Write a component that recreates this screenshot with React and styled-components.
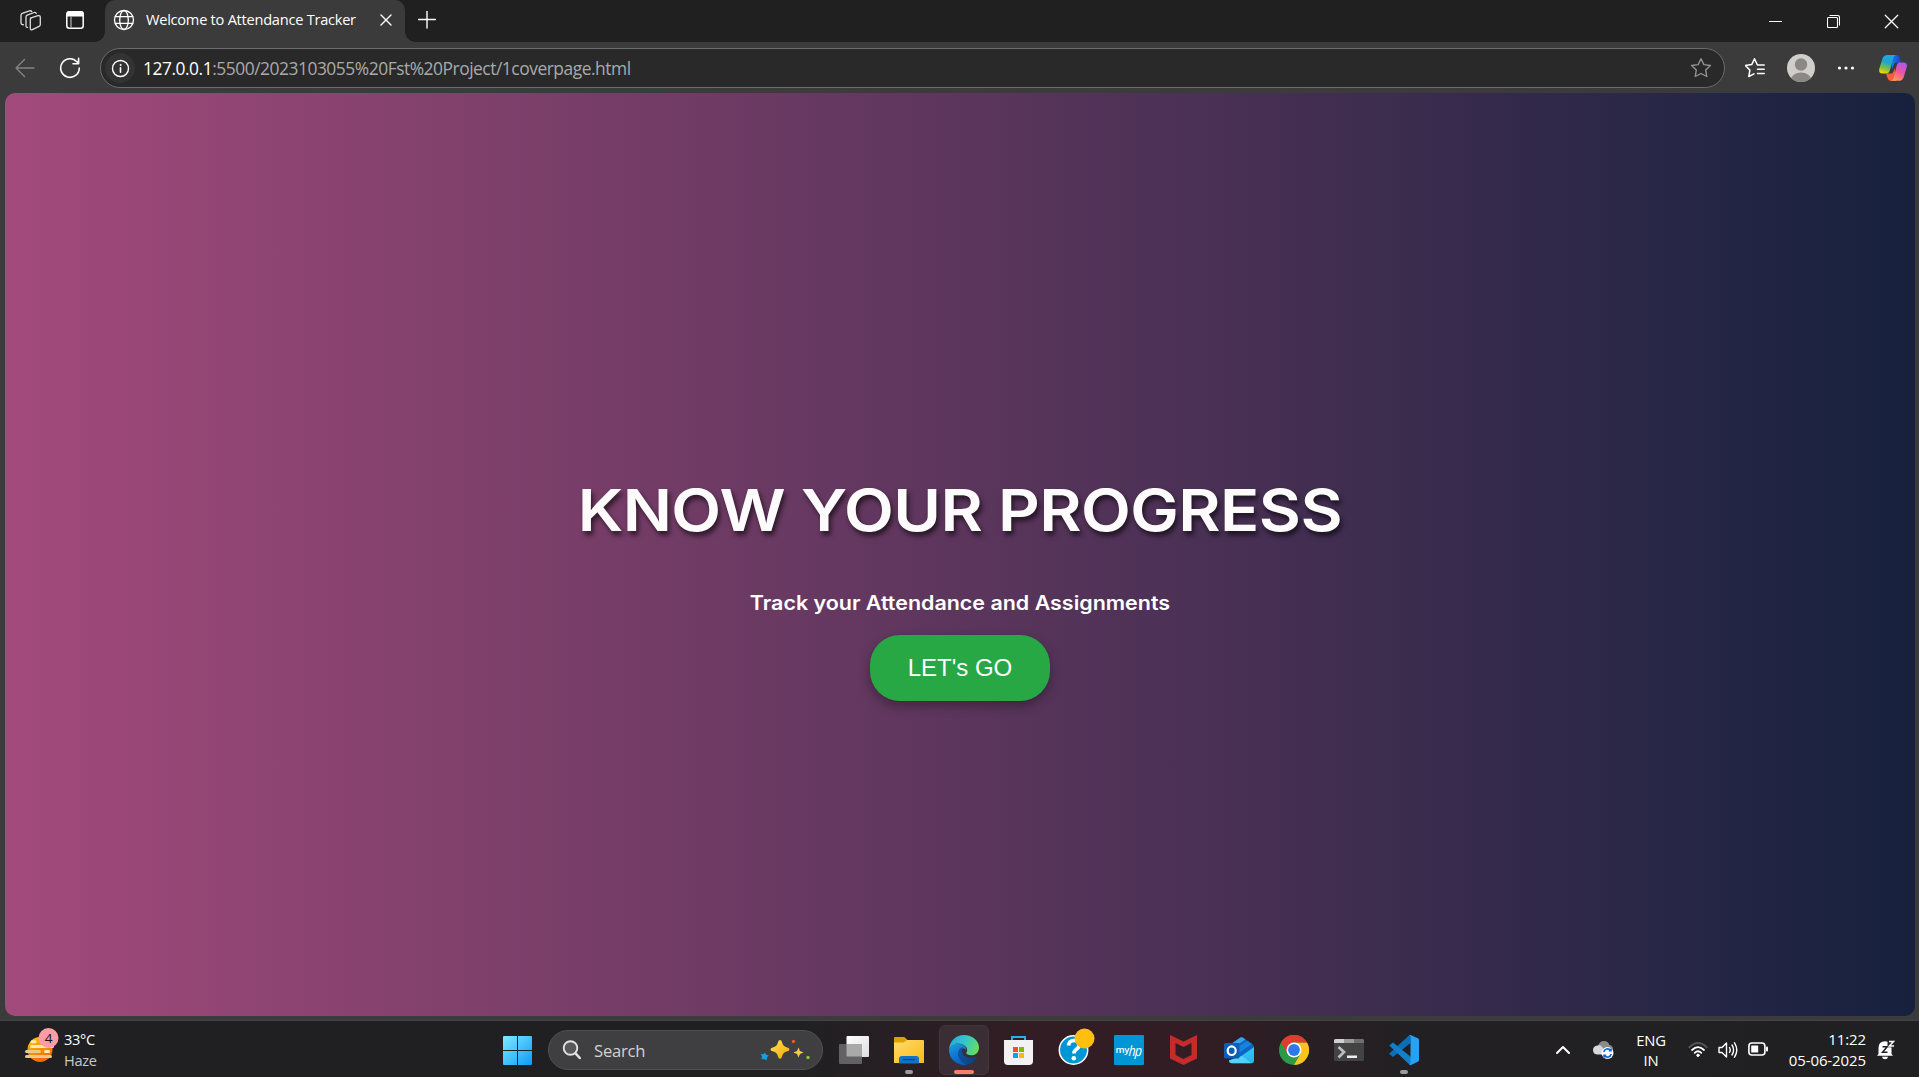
import React from 'react';
import styled, { createGlobalStyle, css } from 'styled-components';

const GlobalStyle = createGlobalStyle`
  * { box-sizing: border-box; }
  html, body { margin: 0; padding: 0; background: #3b3b3b; overflow: hidden; }
  svg { display: block; flex: none; }
`;

const ui = "'Open Sans', 'Noto Sans', sans-serif";

const Screen = styled.div`
  width: 1919px;
  height: 1077px;
  display: flex;
  flex-direction: column;
  font-family: ${ui};
  color: #fff;
  overflow: hidden;
`;

const TitleBar = styled.header`
  height: 42px;
  background: #202020;
  display: flex;
  align-items: flex-start;
`;

const TitleTools = styled.div`
  width: 105px;
  height: 42px;
  padding: 10px 0 0 20px;
  display: flex;
  gap: 25px;
`;

const Tab = styled.div`
  position: relative;
  width: 300px;
  height: 42px;
  padding: 0 13px 2px 8px;
  background: #3b3b3b;
  border-radius: 10px 10px 0 0;
  display: flex;
  align-items: center;
  &::before, &::after {
    content: '';
    position: absolute;
    bottom: 0;
    width: 10px;
    height: 10px;
  }
  &::before {
    left: -10px;
    background: radial-gradient(circle at 0 0, transparent 9.5px, #3b3b3b 10px);
  }
  &::after {
    right: -10px;
    background: radial-gradient(circle at 100% 0, transparent 9.5px, #3b3b3b 10px);
  }
`;

const TabTitle = styled.span`
  flex: 1;
  margin-left: 11px;
  padding-bottom: 2px;
  font-size: 14.6px;
  letter-spacing: -0.25px;
  line-height: 20px;
  white-space: nowrap;
`;

const NewTab = styled.div`
  padding: 11px 0 0 13px;
`;

const WindowButtons = styled.div`
  margin-left: auto;
  margin-right: -1px;
  display: flex;
`;

const WindowButton = styled.div`
  width: 58px;
  height: 42px;
  display: flex;
  align-items: center;
  justify-content: center;
`;

const Toolbar = styled.div`
  height: 51px;
  padding: 6px 12px 5px 14px;
  background: #3b3b3b;
  display: flex;
  align-items: center;
`;

const NavIcons = styled.div`
  width: 86px;
  display: flex;
  gap: 23px;
`;

const AddressBar = styled.div`
  width: 1625px;
  height: 40px;
  padding: 0 12px 0 4px;
  border: 1px solid #6b6b6b;
  border-radius: 20px;
  background: #292929;
  display: flex;
  align-items: center;
`;

const SiteInfo = styled.div`
  width: 30px;
  height: 30px;
  border-radius: 50%;
  background: #333;
  display: flex;
  align-items: center;
  justify-content: center;
`;

const Url = styled.div`
  flex: 1;
  margin-left: 8px;
  font-size: 17.4px;
  letter-spacing: -0.47px;
  line-height: 24px;
  white-space: nowrap;
  color: #a9a9a9;
  b { font-weight: 400; color: #fff; }
`;

const ToolbarRight = styled.div`
  flex: 1;
  display: flex;
  align-items: center;
  padding-left: 20px;
  gap: 21px;
`;

const Frame = styled.main`
  height: 927px;
  padding: 0 4px 4px 5px;
  background: #3b3b3b;
`;

const Page = styled.section`
  height: 923px;
  padding-top: 380px;
  border-radius: 10px;
  background: linear-gradient(to right, #a24a7b, #16213e);
  display: flex;
  flex-direction: column;
  align-items: center;
`;

const Headline = styled.h1`
  margin: 0;
  font-family: Inter, sans-serif;
  font-size: 58px;
  font-weight: 600;
  line-height: 74px;
  letter-spacing: -0.5px;
  transform: scaleX(1.118);
  color: #fdfbfc;
  white-space: nowrap;
  text-shadow: 2px 4px 5px rgba(0, 0, 0, 0.6);
`;

const Subtitle = styled.p`
  margin: 44px 0 19px;
  font-family: Inter, sans-serif;
  font-size: 19.4px;
  font-weight: 600;
  line-height: 25px;
  transform: scaleX(1.106);
  white-space: nowrap;
`;

const GoButton = styled.button`
  width: 180px;
  height: 66px;
  border: 0;
  border-radius: 30px;
  background: #28a745;
  color: #fff;
  font: 24px 'Liberation Sans', Arial, sans-serif;
  box-shadow: 0 5px 12px rgba(0, 0, 0, 0.32);
`;

const Taskbar = styled.footer`
  height: 57px;
  border-top: 1px solid #444;
  background: linear-gradient(to right, #202022 800px, #321d24 1020px, #321d24 1190px, #222023 1400px, #202022);
  display: grid;
  grid-template-columns: 490px 942px 1fr;
`;

const Weather = styled.div`
  padding: 6px 0 0 24px;
  display: flex;
  gap: 4px;
`;

const WeatherText = styled.div`
  padding-top: 2px;
  font-size: 14.6px;
  letter-spacing: -0.3px;
  line-height: 20.5px;
  span { display: block; color: #c8c8c8; }
`;

const Apps = styled.div`
  display: flex;
  align-items: center;
`;

const Slot = styled.div`
  position: relative;
  width: 55px;
  height: 56px;
  display: flex;
  align-items: center;
  justify-content: center;
  padding-top: 2px;
  ${(p) => p.$running && css`
    &::after {
      content: '';
      position: absolute;
      bottom: 3px;
      left: 50%;
      width: ${p.$active ? 20 : 8}px;
      height: 4px;
      margin-left: ${p.$active ? -10 : -4}px;
      border-radius: 2px;
      background: ${p.$active ? '#f4806a' : '#9b9b9b'};
    }
  `}
`;

const ActiveTile = styled.div`
  width: 50px;
  height: 50px;
  border: 1px solid #43363d;
  border-radius: 6px;
  background: #3a2d34;
  display: flex;
  align-items: center;
  justify-content: center;
`;

const SearchBox = styled.div`
  width: 275px;
  height: 40px;
  margin: 2px 3px 0;
  padding: 0 12px 0 13px;
  border: 1px solid #515153;
  border-radius: 20px;
  background: #3f3f41;
  display: flex;
  align-items: center;
`;

const SearchLabel = styled.span`
  flex: 1;
  margin-left: 12px;
  font-size: 16.6px;
  letter-spacing: -0.2px;
  color: #d2d2d2;
`;

const MyHp = styled.div`
  width: 30px;
  height: 30px;
  border-radius: 1px;
  background: #0096d6;
  display: flex;
  align-items: center;
  justify-content: center;
  font-size: 9.5px;
  font-weight: 600;
  letter-spacing: -0.4px;
  line-height: 28px;
  i {
    font: italic 400 15px 'Liberation Sans', sans-serif;
    letter-spacing: -0.5px;
    transform: scaleX(0.8) skewX(-6deg);
    transform-origin: left;
    margin-right: -3px;
  }
`;

const Tray = styled.div`
  padding: 2px 24px 0 123px;
  display: flex;
  align-items: center;
`;

const Language = styled.div`
  width: 74px;
  font-size: 14.8px;
  letter-spacing: -0.2px;
  line-height: 20px;
  text-align: center;
`;

const Status = styled.div`
  display: flex;
  gap: 10px;
`;

const Clock = styled.div`
  flex: 1;
  margin-right: 11px;
  font-size: 15px;
  letter-spacing: -0.1px;
  line-height: 20.5px;
  text-align: right;
  margin-top: -1px;
`;

const TrayIcon = styled.div`
  margin-left: ${(p) => p.$left || 0}px;
`;

const line = { fill: 'none', stroke: '#fff', strokeWidth: 1.4, strokeLinecap: 'round', strokeLinejoin: 'round' };

const WorkspacesIcon = () => (
  <svg width="21" height="21" viewBox="0 0 21 21" {...line} stroke="#ddd" strokeWidth="1.3">
    <path d="M10.3 8.2 18 5.7q2.3-.5 2.3 1.6v7.3q0 1.2-1.2 1.7l-6.8 3.4q-2 .7-2-1.4V9.7q0-1.2 1-1.7z" />
    <path d="M7.6 17.3q-1.6.4-1.6-1.6V7q0-1.400 1.200-1.900L14 2.500q1.700-.5 2.300 1" />
    <path d="M3.400 14.700q-2.100.3-2.400-1.500V5.300q0-1.400 1.200-1.900L9.500.9q1.600-.5 2.200.7" />
  </svg>
);

const TabActionsIcon = () => (
  <svg width="18" height="20" viewBox="0 0 18 20">
    <rect x=".8" y="1.800" width="16.400" height="16.400" rx="2.500" fill="none" stroke="#fff" strokeWidth="1.500" />
    <path d="M.5 6.500V3.500q0-2.500 2.500-2.500h12q2.500 0 2.500 2.500v3z" fill="#fff" />
    <path d="M5 6v12" stroke="#aaa" strokeWidth="1.300" />
  </svg>
);

const GlobeIcon = () => (
  <svg width="22" height="22" viewBox="0 0 22 22" {...line} strokeWidth="1.300">
    <circle cx="11" cy="11" r="9.500" />
    <ellipse cx="11" cy="11" rx="4.300" ry="9.500" />
    <path d="M2.300 7.700h17.400M2.300 14.300h17.400" />
  </svg>
);

const CloseIcon = ({ size = 12, width = 1.5 }) => (
  <svg width={size} height={size} viewBox="0 0 12 12" {...line} strokeWidth={width}>
    <path d="m1 1 10 10M11 1 1 11" />
  </svg>
);

const BackIcon = () => (
  <svg width="22" height="22" viewBox="0 0 22 22" {...line} stroke="#838383">
    <path d="M20 11H2M10.500 2.500 2 11l8.500 8.500" />
  </svg>
);

const ReloadIcon = () => (
  <svg width="22" height="22" viewBox="0 0 22 22" {...line} strokeWidth="1.600">
    <path d="M20.300 11a9.300 9.300 0 1 1-2.400-6.200L19.400 6.500M19.600 1.200v5.500H14" />
  </svg>
);

const InfoIcon = () => (
  <svg width="19" height="19" viewBox="0 0 19 19" {...line}>
    <circle cx="9.500" cy="9.500" r="8" />
    <path d="M9.500 8.700v4.500" strokeWidth="1.600" />
    <circle cx="9.500" cy="6" r=".6" fill="#fff" strokeWidth=".8" />
  </svg>
);

const StarIcon = () => (
  <svg width="22" height="22" viewBox="0 0 22 22" {...line} stroke="#929292">
    <path d="m11 1.700 2.900 5.900 6.500.9-4.700 4.600 1.100 6.400-5.800-3-5.800 3 1.100-6.400L1.600 8.500l6.500-.9z" />
  </svg>
);

const FavouritesIcon = () => (
  <svg width="21" height="22" viewBox="1 0 21 22" {...line} strokeWidth="1.500">
    <path d="M14 8h-.6L10.500 1.800 7.700 7.600l-6.400.9 4.600 4.600L4.800 19.500l5.200-2.700M13.500 8h6.700M13.500 12.300h6.700M13.500 16.500h6.700" />
  </svg>
);

const Avatar = () => (
  <svg width="28" height="28" viewBox="0 0 28 28">
    <clipPath id="face"><circle cx="14" cy="14" r="14" /></clipPath>
    <g clipPath="url(#face)">
      <path fill="#d0cecb" d="M0 0h28v28H0z" />
      <circle cx="14" cy="10.500" r="6.200" fill="#8c8885" />
      <ellipse cx="14" cy="25.500" rx="9.800" ry="7" fill="#8c8885" />
    </g>
  </svg>
);

const MoreIcon = () => (
  <svg width="20" height="6" viewBox="-1 0 20 6" fill="#fff">
    <circle cx="2.500" cy="3" r="1.600" /><circle cx="9" cy="3" r="1.600" /><circle cx="15.500" cy="3" r="1.600" />
  </svg>
);

const CopilotSlot = styled.div`
  margin-left: auto;
`;

const CopilotIcon = () => (
  <svg width="28" height="27" viewBox="0 0 28 27">
    <defs>
      <linearGradient id="cpA" x1=".6" y1="0" x2=".3" y2="1">
        <stop offset="0" stopColor="#1ba7f0" /><stop offset=".4" stopColor="#22a5c8" /><stop offset=".75" stopColor="#7fc440" /><stop offset="1" stopColor="#ffd300" />
      </linearGradient>
      <linearGradient id="cpB" x1=".8" y1="0" x2=".3" y2="1">
        <stop offset="0" stopColor="#a35af5" /><stop offset=".5" stopColor="#ed53a5" /><stop offset="1" stopColor="#ff9a50" />
      </linearGradient>
      <linearGradient id="cpC"><stop offset="0" stopColor="#1b7fe8" /><stop offset="1" stopColor="#1741d2" /></linearGradient>
    </defs>
    <path d="M12 0h5.500q2.300 0 3 2.200L22 7.500h-4.500q-2 0-2.700 2L13 14z" fill="url(#cpC)" />
    <path d="M7 18.500h5q2 0 2.500-2l1-3.500L17 26h-4.500q-3 0-3.800-2.600z" fill="#f4603c" />
    <path d="M8.500 0H17q-2 .6-2.600 2.700L11 15q-1 3.500-4 3.500H3.500Q-.8 18.500.4 13.500L3.300 4Q4.500 0 8.500 0z" fill="url(#cpA)" />
    <path d="M20 7.500h4.500q4.300 0 3.200 4.700l-2.900 9.700q-1.300 3.900-5.300 3.900H12q2-.6 2.600-2.700l3-12q.8-3.300 2.400-3.600z" fill="url(#cpB)" />
  </svg>
);

const WeatherIcon = () => (
  <svg width="36" height="40" viewBox="0 0 36 40">
    <defs><linearGradient id="sun" x1="0" y1="0" x2=".4" y2="1"><stop stopColor="#ffca00" /><stop offset="1" stopColor="#f16a0b" /></linearGradient></defs>
    <circle cx="16" cy="22.500" r="12.500" fill="url(#sun)" />
    <g fill="none" strokeLinecap="round" strokeWidth="3">
      <path stroke="#ffe9b5" d="M8 14.700h3M7.500 19.600h21M21.500 24.500h3" />
      <path stroke="#e9c98a" d="M2.500 24.500h13M2.500 29.500h24" />
    </g>
    <circle cx="24.500" cy="11" r="10" fill="#ff9da6" />
    <text x="24.500" y="16" textAnchor="middle" fontFamily="Open Sans" fontSize="13.500" fill="#111">4</text>
  </svg>
);

const StartIcon = () => (
  <svg width="29" height="29" viewBox="0 0 29 29">
    <defs><linearGradient id="win" gradientUnits="userSpaceOnUse" x1="0" y1="0" x2="29" y2="29"><stop stopColor="#7cebff" /><stop offset="1" stopColor="#0d9bf8" /></linearGradient></defs>
    <path fill="url(#win)" d="M1 0h13v14H0V1q0-1 1-1zM15 0h13q1 0 1 1v13H15zM0 15h14v14H1q-1 0-1-1zM15 15h14v13q0 1-1 1H15z" />
  </svg>
);

const SearchIcon = () => (
  <svg width="20" height="20" viewBox="0 0 20 20" fill="none" stroke="#e2e2e2">
    <circle cx="8.500" cy="8" r="6.800" strokeWidth="1.900" fill="#58585a" />
    <path d="m13.500 13.300 4.300 4.700" strokeWidth="2.500" strokeLinecap="round" />
  </svg>
);

const SparklesIcon = () => (
  <svg width="50" height="22" viewBox="0 0 50 22">
    <defs><linearGradient id="sp" x2="1" y2="1"><stop stopColor="#ffdf58" /><stop offset="1" stopColor="#f5a900" /></linearGradient></defs>
    <path fill="url(#sp)" d="M20 1q1.400 0 2 2.300 1 4.300 5.200 5.200 2.300.6 2.300 1.900t-2.300 1.900q-4.200 1-5.200 5.200-.6 2.300-2 2.300t-2-2.300q-1-4.200-5.200-5.200-2.300-.6-2.300-1.900t2.300-1.900Q17 7.600 18 3.300 18.600 1 20 1z" />
    <path fill="#f9ce45" d="m38.500 8.500 1.400 3.600 3.600 1.400-3.600 1.400-1.400 3.600-1.400-3.600-3.600-1.400 3.600-1.400z" />
    <path fill="#0ca5ec" d="m5 13.500 1 2.300 2.800.8-2 1.900-.3 3-2.400-1.400-2.900.2 1-2.600L.7 15l2.800.3z" />
    <circle cx="33.500" cy="2.500" r="1.700" fill="#ea5b22" /><circle cx="48" cy="18.500" r="1.700" fill="#8bc540" />
  </svg>
);

const TaskViewIcon = () => (
  <svg width="30" height="29" viewBox="0 0 30 29">
    <defs><linearGradient id="tv" x2="1" y2="1"><stop stopColor="#fff" /><stop offset="1" stopColor="#dedede" /></linearGradient></defs>
    <rect x="7.500" y="0" width="22.500" height="21" rx="1" fill="url(#tv)" />
    <rect x="0" y="8" width="23" height="20" rx="1" fill="#626262" />
    <path d="M7.500 8H23v12.500H7.500z" fill="#a9a9a9" />
  </svg>
);

const FolderIcon = () => (
  <svg width="30" height="27" viewBox="0 0 30 27">
    <defs><linearGradient id="fo" x2="1" y2="1"><stop stopColor="#ffdc6b" /><stop offset="1" stopColor="#fbb917" /></linearGradient></defs>
    <path fill="#dfa000" d="M1 0h8.500q1 0 1.700.8L13.500 3v5H0V1q0-1 1-1z" />
    <path fill="url(#fo)" d="M0 5.500h9.500L13 3h16q1 0 1 1v22H0z" />
    <path fill="#0f73c7" d="M5 26.500V22q0-3 3-3h14q3 0 3 3v4.500z" />
    <path d="M9 22.600h12" stroke="#07498b" strokeWidth="1.300" />
  </svg>
);

const EdgeIcon = () => (
  <svg width="30" height="30" viewBox="0 0 30 30">
    <defs>
      <linearGradient id="edT" x1="0" y1=".3" x2="1" y2=".6"><stop stopColor="#28a9df" /><stop offset=".5" stopColor="#34c6c9" /><stop offset="1" stopColor="#68de5b" /></linearGradient>
      <linearGradient id="edL" x1="0" y1="0" x2=".4" y2="1"><stop stopColor="#1c9de0" /><stop offset="1" stopColor="#0a5fc0" /></linearGradient>
      <linearGradient id="edB" x1="0" y1="0" x2="1" y2=".4"><stop stopColor="#0f56ae" /><stop offset="1" stopColor="#0c437f" /></linearGradient>
    </defs>
    <path fill="url(#edL)" d="M0 15Q.3 8.500 8 8.500c5.500 0 9.500 3.500 9.300 7C14 11 10 15 10.500 20c.5 5 4.500 8.500 7.500 9.700A15 15 0 0 1 0 15z" />
    <path fill="url(#edB)" d="M14 12c-5 1.500-6.500 7-3.500 12 2 3.300 5 5.300 7.500 5.700 4.600-.8 8-3.600 9.800-7.200.4-.8-.3-1.100-1-.7-5.500 2.600-12.800.5-13.600-5-.2-1.800.2-3.300.8-4.800z" />
    <path fill="url(#edT)" d="M0 14C.8 6 7 0 15 0c8.500 0 15 6 15 12.500 0 5-3.500 7.800-7.500 7.800-3.300 0-5.500-1.200-5.300-2.200.1-.7 1-1.200 1-3 0-3.500-4.200-6.600-9.200-6.600C4.500 8.500 1 11 0 14z" />
  </svg>
);

const StoreIcon = () => (
  <svg width="30" height="30" viewBox="0 0 30 30">
    <path d="M8 7V2h13v5" fill="none" stroke="#27b1e8" strokeWidth="2" />
    <path fill="#f2f2f2" d="M0 5h29v21q0 4-4 4H4q-4 0-4-4z" />
    <path fill="#f25022" d="M9 12h5v5H9z" /><path fill="#7fba00" d="M15 12h5v5h-5z" />
    <path fill="#00a4ef" d="M9 18h5v5H9z" /><path fill="#ffb900" d="M15 18h5v5h-5z" />
  </svg>
);

const HelpIcon = () => (
  <svg width="37" height="38" viewBox="0 0 37 38">
    <circle cx="15.500" cy="22" r="14.200" fill="#0096d6" stroke="#fff" strokeWidth="1.500" />
    <path d="M10.500 17.500q.5-5 5.500-5t5 4.500q0 2.500-2.600 4.300Q16 23 16 25.500" fill="none" stroke="#fff" strokeWidth="3.700" />
    <circle cx="15.800" cy="30.200" r="2.300" fill="#fff" />
    <circle cx="26.500" cy="10.500" r="10" fill="#ffbf0f" />
  </svg>
);

const HelpSlot = styled(Slot)`
  padding: 0 0 4px 5px;
`;

const McAfeeIcon = () => (
  <svg width="28" height="30" viewBox="0 0 28 30">
    <path fill="#c42b2b" fillRule="evenodd" d="m0 0 13.500 6.500L27 0v23.500L13.500 30 0 23.500zm5.500 8v12l8 4 8-4V8l-8 4z" />
  </svg>
);

const OutlookIcon = () => (
  <svg width="30" height="27" viewBox="0 0 30 27">
    <defs><linearGradient id="ol" x2="1" y2="1"><stop stopColor="#42d3f8" /><stop offset="1" stopColor="#1fb5f0" /></linearGradient></defs>
    <path fill="#0c65c7" d="M5 8.500 16 .7q1.500-1 3 0L28 7q2 1.300 2 3L17 20 5 14z" />
    <path fill="#3aa2ec" d="M5 8.500 16 .7q1.500-1 3 0l2.500 1.700L7 12z" />
    <path fill="#1783dc" d="m10 12 13.500-8.200L28 7 13 17z" />
    <path fill="url(#ol)" d="M30 10v13.500q0 2.700-2.700 2.700H8q-3 0-3-3l12-4z" />
    <path fill="#7be6fb" d="m14 20 4-1 9.500 7.200H8q-3 0-3-2.500z" opacity=".5" />
    <rect y="6" width="15.500" height="15.500" rx="1.500" fill="#0a5eb9" />
    <ellipse cx="7.700" cy="13.700" rx="4" ry="4.300" fill="none" stroke="#fff" strokeWidth="2.200" />
  </svg>
);

const ChromeIcon = () => (
  <svg width="30" height="30" viewBox="0 0 30 30">
    <circle cx="15" cy="15" r="15" fill="#2b9a48" />
    <path fill="#fcc31e" d="M15 30a15 15 0 0 0 13-22.500H15l6.500 11.300z" />
    <path fill="#e33b2e" d="M2 7.500a15 15 0 0 1 26 0H15q-5 0-7 4.500l.5 6.800z" />
    <circle cx="15" cy="15" r="7.500" fill="#fff" /><circle cx="15" cy="15" r="5.900" fill="#2f78e8" />
  </svg>
);

const TerminalIcon = () => (
  <svg width="30" height="22" viewBox="0 0 30 22">
    <rect width="30" height="22" rx="1.500" fill="#434343" />
    <path fill="#cfcfcf" d="M1.500 0H10v4H0V1.500Q0 0 1.500 0z" /><path fill="#9b9b9b" d="M10 0h10v4H10z" /><path fill="#6f6f6f" d="M20 0h8.500Q30 0 30 1.500V4H20z" />
    <path d="m4.500 8 5.500 5-5.500 5.500" fill="none" stroke="#bdbdbd" strokeWidth="2.700" /><path fill="#f0f0f0" d="M13 16.500h10V19H13z" />
  </svg>
);

const CodeIcon = () => (
  <svg width="30" height="30" viewBox="0 0 30 30">
    <path fill="#0a6fb9" d="M21.500 0v8L4 22 0 18.800 20 .5z" />
    <path fill="#127fc9" d="M22 30v-8L4 7.500.3 10.500 19.800 29z" />
    <path fill="#27a2f2" d="M21.500 0 28.800 3.200Q30 3.800 30 5v20q0 1.200-1.200 1.800L22 30q-1 .2-2.200-1 1.700.4 1.700-1.600V2.200q0-1.500-1.500-1.700.7-.6 1.500-.5z" />
  </svg>
);

const ChevronIcon = () => (
  <svg width="16" height="10" viewBox="0 0 16 10" {...line} strokeWidth="2"><path d="m2 8 6-6 6 6" /></svg>
);

const CloudIcon = () => (
  <svg width="21" height="18" viewBox="0 0 21 18">
    <path fill="#8b8b8b" d="M5 5q1.500-5 6-5 4 0 5.500 4 3.500.7 3.500 4.500v3H6z" />
    <path fill="#d8d8d8" d="M4.500 4.500q3.500-.7 5 2l4.500 7H4Q0 13 0 9t4.500-4.500z" />
    <circle cx="14.500" cy="12" r="6" fill="#fff" />
    <path d="M10.800 11a4 4 0 0 1 6.800-1.800M18.200 13a4 4 0 0 1-6.800 1.800M18 7.500v2.200h-2.200M11 16.500v-2.200h2.200" fill="none" stroke="#1265c8" strokeWidth="1.600" />
  </svg>
);

const WifiIcon = () => (
  <svg width="20" height="17" viewBox="0 0 20 17" {...line} strokeWidth="1.800">
    <path d="M1.200 6.300q8.800-8.500 17.600 0" stroke="#555" />
    <path d="M4 9q6-5.700 12 0M6.700 11.800q3.300-3 6.600 0" />
    <circle cx="10" cy="14.300" r="1.200" fill="#fff" strokeWidth="1" />
  </svg>
);

const VolumeIcon = () => (
  <svg width="20" height="18" viewBox="0 0 20 18" {...line}>
    <path d="M1 6.500h3L8.500 2v14L4 11.500H1z" /><path d="M11.500 6.500q1.500 2.500 0 5M14 4q3.200 5 0 10M16.500 1.800q4.600 7.200 0 14.400" />
  </svg>
);

const BatteryIcon = () => (
  <svg width="20" height="16" viewBox="0 0 20 16" {...line} strokeWidth="1.600">
    <rect x=".9" y="2" width="16" height="12" rx="3" /><rect x="3.200" y="4.500" width="7" height="7" rx=".5" fill="#fff" stroke="none" /><path d="M19 6.500v3" strokeWidth="2" />
  </svg>
);

const BellIcon = () => (
  <svg width="18" height="20" viewBox="0 0 18 20">
    <path fill="#fff" d="M1.500 14V8q0-6.500 6.500-6.700 6.500.2 6.500 6.700v6l1.500 1.700H0zM5 16.700h6q-.5 2.500-3 2.500t-3-2.500z" />
    <path fill="#222" d="M10.500 0H18v7.300h-7.500z" />
    <path d="M5.500 6.800h4.700l-4.700 5.400h5" fill="none" stroke="#222" strokeWidth="1.500" />
    <path d="M12 1.500h4.500L12.300 6H17" fill="none" stroke="#fff" strokeWidth="1.400" />
  </svg>
);

export default function App() {
  return (
    <Screen>
      <GlobalStyle />
      <TitleBar>
        <TitleTools><WorkspacesIcon /><TabActionsIcon /></TitleTools>
        <Tab>
          <GlobeIcon />
          <TabTitle>Welcome to Attendance Tracker</TabTitle>
          <CloseIcon size={12} width={1.4} />
        </Tab>
        <NewTab>
          <svg width="18" height="18" viewBox="0 0 18 18" {...line}><path d="M.5 8.500h17M9 0v17" /></svg>
        </NewTab>
        <WindowButtons>
          <WindowButton><svg width="13" height="3" viewBox="0 0 13 3"><path d="M0 1.500h13" stroke="#fff" /></svg></WindowButton>
          <WindowButton>
            <svg width="13" height="13" viewBox="0 0 13 13" {...line} strokeWidth="1.100"><rect x=".5" y="2.500" width="10" height="10" rx="1" /><path d="M3 .5h7.500q2 0 2 2V10" /></svg>
          </WindowButton>
          <WindowButton><CloseIcon size={15} width={1} /></WindowButton>
        </WindowButtons>
      </TitleBar>
      <Toolbar>
        <NavIcons><BackIcon /><ReloadIcon /></NavIcons>
        <AddressBar>
          <SiteInfo><InfoIcon /></SiteInfo>
          <Url><b>127.0.0.1</b>:5500/2023103055%20Fst%20Project/1coverpage.html</Url>
          <StarIcon />
        </AddressBar>
        <ToolbarRight>
          <FavouritesIcon />
          <Avatar />
          <MoreIcon />
          <CopilotSlot><CopilotIcon /></CopilotSlot>
        </ToolbarRight>
      </Toolbar>
      <Frame>
        <Page>
          <Headline>KNOW YOUR PROGRESS</Headline>
          <Subtitle>Track your Attendance and Assignments</Subtitle>
          <GoButton>LET's GO</GoButton>
        </Page>
      </Frame>
      <Taskbar>
        <Weather>
          <WeatherIcon />
          <WeatherText>33°C<span>Haze</span></WeatherText>
        </Weather>
        <Apps>
          <Slot><StartIcon /></Slot>
          <SearchBox><SearchIcon /><SearchLabel>Search</SearchLabel><SparklesIcon /></SearchBox>
          <Slot><TaskViewIcon /></Slot>
          <Slot $running><FolderIcon /></Slot>
          <Slot $running $active><ActiveTile><EdgeIcon /></ActiveTile></Slot>
          <Slot><StoreIcon /></Slot>
          <HelpSlot><HelpIcon /></HelpSlot>
          <Slot><MyHp>my<i>hp</i></MyHp></Slot>
          <Slot><McAfeeIcon /></Slot>
          <Slot><OutlookIcon /></Slot>
          <Slot><ChromeIcon /></Slot>
          <Slot><TerminalIcon /></Slot>
          <Slot $running><CodeIcon /></Slot>
        </Apps>
        <Tray>
          <ChevronIcon />
          <TrayIcon $left={22}><CloudIcon /></TrayIcon>
          <Language>ENG<br />IN</Language>
          <Status><WifiIcon /><VolumeIcon /><BatteryIcon /></Status>
          <Clock>11:22<br />05-06-2025</Clock>
          <BellIcon />
        </Tray>
      </Taskbar>
    </Screen>
  );
}
